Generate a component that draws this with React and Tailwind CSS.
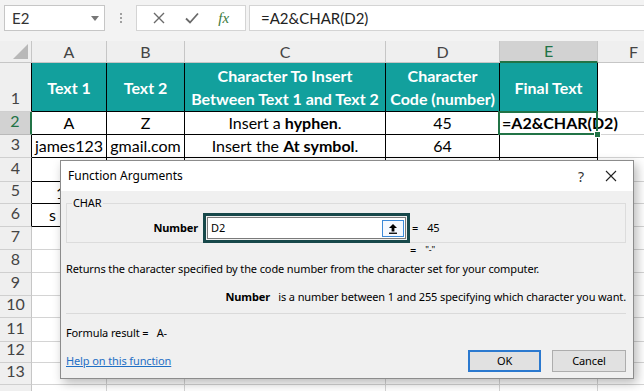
import React from 'react';

const COLS = ['w-[75px]', 'w-[78px]', 'w-[201px]', 'w-[114px]', 'w-[98px]'];
const LETTERS = ['A', 'B', 'C', 'D', 'E'];

const RowHead = ({ n, h, active, boxed }) => (
  <div
    className={`${h} w-[32px] shrink-0 flex items-end justify-center pb-[1px] border-b ${
      active
        ? 'bg-[#d2d2d2] text-[#217346] border-r-2 border-r-[#217346] border-b-[#b9b9b9]'
        : boxed
        ? 'bg-[#efefef] text-[#444] border-r border-r-black border-b-[#cfcfcf]'
        : 'bg-[#efefef] text-[#444] border-r border-r-[#c6c6c6] border-b-[#cfcfcf]'
    }`}
  >
    {n}
  </div>
);

const Cell = ({ i, h, boxed, children, className = '' }) => (
  <div
    className={`${COLS[i]} ${h} shrink-0 flex items-center justify-center whitespace-nowrap overflow-hidden border-r border-b ${
      boxed ? 'border-black' : 'border-[#d4d4d4]'
    } ${className}`}
  >
    {children}
  </div>
);

const Filler = ({ h }) => <div className={`${h} flex-1 border-b border-[#d4d4d4]`} />;

export default function App() {
  // column A of rows 4-6 is mostly hidden behind the dialog: only the first letters show
  const lower = [
    { n: 4, h: 'h-[24px]' },
    { n: 5, h: 'h-[22px]', a: '1', pad: 'pl-[24px]' },
    { n: 6, h: 'h-[23px]', a: 's', pad: 'pl-[17px]' },
    { n: 7, h: 'h-[23px]' },
    { n: 8, h: 'h-[23px]' },
    { n: 9, h: 'h-[23px]' },
    { n: 10, h: 'h-[22px]' },
    { n: 11, h: 'h-[24px]' },
    { n: 12, h: 'h-[21px]' },
    { n: 13, h: 'h-[22px]' },
    { n: null, h: 'h-[22px]' },
  ];

  return (
    <div className="relative w-[644px] h-[391px] overflow-hidden bg-white font-['Lato','Liberation_Sans',sans-serif] text-[16px] text-black">
      {/* formula bar */}
      <div className="h-[41px] bg-[#f3f3f3] flex items-start pt-[5px] pl-[4px]">
        <div className="w-[101px] h-[26px] bg-white border border-[#c6c6c6] flex items-center pl-[7px] pr-[5px] text-[15px] text-[#333]">
          <span className="flex-1">E2</span>
          <svg width="8" height="5" viewBox="0 0 8 5"><path d="M0 0h8L4 5z" fill="#777" /></svg>
        </div>
        <div className="w-[31px] h-[26px] flex flex-col items-center justify-center gap-[2px]">
          <span className="w-[2px] h-[2px] bg-[#a0a0a0]" />
          <span className="w-[2px] h-[2px] bg-[#a0a0a0]" />
          <span className="w-[2px] h-[2px] bg-[#a0a0a0]" />
        </div>
        <div className="w-[110px] h-[26px] bg-white border border-[#d4d4d4] flex items-center justify-around px-[6px]">
          <svg width="12" height="12" viewBox="0 0 12 12"><path d="M1 1l10 10M11 1L1 11" stroke="#6a6a6a" strokeWidth="1.4" /></svg>
          <svg width="14" height="12" viewBox="0 0 14 12"><path d="M1 6.5l4 4L13 1.5" stroke="#6a6a6a" strokeWidth="1.8" fill="none" /></svg>
          <span className="font-['Liberation_Serif',serif] italic text-[15px] text-[#3b7a3b] leading-none">fx</span>
        </div>
        <div className="flex-1 h-[26px] ml-[3px] bg-white border border-[#d4d4d4] border-r-0 flex items-center pl-[11px] text-[15px] text-[#222]">
          =A2&amp;CHAR(D2)
        </div>
      </div>

      {/* column headers */}
      <div className="flex h-[22px] text-[#444]">
        <div className="w-[32px] shrink-0 bg-[#efefef] border-r border-b border-[#c6c6c6] flex items-end justify-end p-[3px]">
          <svg width="15" height="15" viewBox="0 0 15 15"><path d="M15 0V15H0z" fill="#b8b8b8" /></svg>
        </div>
        {LETTERS.map((l, i) => (
          <div
            key={l}
            className={`${COLS[i]} shrink-0 flex items-center justify-center border-r border-[#c6c6c6] ${
              l === 'E' ? 'bg-[#d2d2d2] text-[#217346] border-b-2 border-b-[#217346]' : 'bg-[#efefef] border-b border-b-[#c6c6c6]'
            }`}
          >
            {l}
          </div>
        ))}
        <div className="flex-1 bg-[#efefef] border-b border-[#c6c6c6] flex items-center pl-[31px]">F</div>
      </div>

      {/* row 1 */}
      <div className="flex">
        <RowHead n={1} h="h-[49px]" boxed />
        {['Text 1', 'Text 2', null, null, 'Final Text'].map((t, i) => (
          <Cell key={i} i={i} h="h-[49px]" boxed className="bg-[#12a09d] text-white font-bold text-center leading-[23px]">
            {t ||
              (i === 2 ? (
                <span>
                  Character To Insert
                  <br />
                  Between Text 1 and Text 2
                </span>
              ) : (
                <span>
                  Character
                  <br />
                  Code (number)
                </span>
              ))}
          </Cell>
        ))}
        <Filler h="h-[49px]" />
      </div>

      {/* row 2 */}
      <div className="flex">
        <RowHead n={2} h="h-[23px]" active />
        <Cell i={0} h="h-[23px]" boxed>A</Cell>
        <Cell i={1} h="h-[23px]" boxed>Z</Cell>
        <Cell i={2} h="h-[23px]" boxed>
          Insert a&nbsp;<b>hyphen</b>.
        </Cell>
        <Cell i={3} h="h-[23px]" boxed>45</Cell>
        <div className="relative w-[98px] h-[23px] shrink-0 border-r border-b border-black flex items-center pl-[2px] whitespace-nowrap font-bold z-10">
          =A2&amp;CHAR(D2)
          <div className="absolute -left-[2px] -top-[1px] -right-[1px] -bottom-[1px] border-2 border-[#217346]" />
          <div className="absolute -right-[4px] -bottom-[4px] w-[7px] h-[7px] bg-[#217346] border border-white" />
        </div>
        <Filler h="h-[23px]" />
      </div>

      {/* row 3 */}
      <div className="flex">
        <RowHead n={3} h="h-[23px]" boxed />
        <Cell i={0} h="h-[23px]" boxed>james123</Cell>
        <Cell i={1} h="h-[23px]" boxed>gmail.com</Cell>
        <Cell i={2} h="h-[23px]" boxed>
          Insert the&nbsp;<b>At symbol</b>.
        </Cell>
        <Cell i={3} h="h-[23px]" boxed>64</Cell>
        <Cell i={4} h="h-[23px]" boxed />
        <Filler h="h-[23px]" />
      </div>

      {lower.map((r, k) => {
        const boxed = r.n && r.n <= 6;
        return (
          <div key={k} className="flex">
            <RowHead n={r.n} h={r.h} boxed={boxed} />
            {COLS.map((c, i) => (
              <Cell key={i} i={i} h={r.h} boxed={boxed} className={i === 0 && r.pad ? `!justify-start ${r.pad}` : ''}>
                {i === 0 ? r.a : ''}
              </Cell>
            ))}
            <Filler h={r.h} />
          </div>
        );
      })}

      {/* Function Arguments dialog */}
      <div className="absolute left-[60px] top-[160px] w-[574px] h-[219px] bg-[#f0f0f0] border border-[#8c8c8c] shadow-[3px_4px_10px_rgba(0,0,0,0.28)] font-['Noto_Sans','Open_Sans',sans-serif] text-[11px] tracking-[-0.12px] text-black flex flex-col">
        <div className="h-[30px] shrink-0 bg-white flex items-center pl-[7px]">
          <span className="flex-1 text-[12px] tracking-normal">Function Arguments</span>
          <span className="w-[44px] text-center text-[14px] text-[#333]">?</span>
          <svg className="mr-[16px] ml-[2px]" width="12" height="12" viewBox="0 0 12 12"><path d="M1 1l10 10M11 1L1 11" stroke="#222" strokeWidth="1.1" /></svg>
        </div>

        <div className="flex-1 px-[5px] pr-[7px] flex flex-col">
          <div className="relative mt-[12px] h-[40px] border border-[#dcdcdc]">
            <span className="absolute -top-[9px] left-[5px] px-[1px] bg-[#f0f0f0] leading-[16px]">CHAR</span>
            <div className="flex items-center mt-[9px]">
              <span className="w-[131px] text-right font-bold">Number</span>
              <div className="ml-[5px] w-[207px] h-[30px] border-[3px] border-[#17484a] p-[1px]">
                <div className="h-full bg-white border border-[#7a7a7a] flex items-center pl-[3px] pr-[1px]">
                  <span className="flex-1">D2</span>
                  <div className="w-[22px] h-[17px] border border-[#3c8ad8] bg-[#f5f9ff] flex items-center justify-center">
                    <svg width="10" height="11" viewBox="0 0 10 11"><path d="M5 1L1 5h2.6v3.4h2.8V5H9z" fill="#000" /><rect x="1" y="9.6" width="8" height="1.3" fill="#000" /></svg>
                  </div>
                </div>
              </div>
              <span className="ml-[2px]">=</span>
              <span className="ml-[9px]">45</span>
            </div>
          </div>

          <div className="flex leading-[14px]">
            <span className="ml-[344px]">=</span>
            <span className="ml-[9px] text-[9px]">"-"</span>
          </div>

          <div className="mt-[5px] leading-[14px]">
            Returns the character specified by the code number from the character set for your computer.
          </div>

          <div className="mt-[14px] leading-[14px] text-right">
            <b>Number</b>&nbsp;&nbsp;&nbsp;is a number between 1 and 255 specifying which character you want.
          </div>

          <div className="mt-[9px] h-px bg-[#dadada]" />

          <div className="mt-[12px] leading-[14px]">Formula result =&nbsp;&nbsp;&nbsp;A-</div>

          <div className="flex items-center mt-[10px]">
            <span className="flex-1 text-[#1f6fc5] underline">Help on this function</span>
            <button className="w-[73px] h-[22px] bg-[#e1e1e1] border-2 border-[#2b79cf] text-[11px]">OK</button>
            <button className="ml-[11px] w-[74px] h-[22px] bg-[#e1e1e1] border border-[#adadad] text-[11px]">Cancel</button>
          </div>
        </div>
      </div>
    </div>
  );
}
